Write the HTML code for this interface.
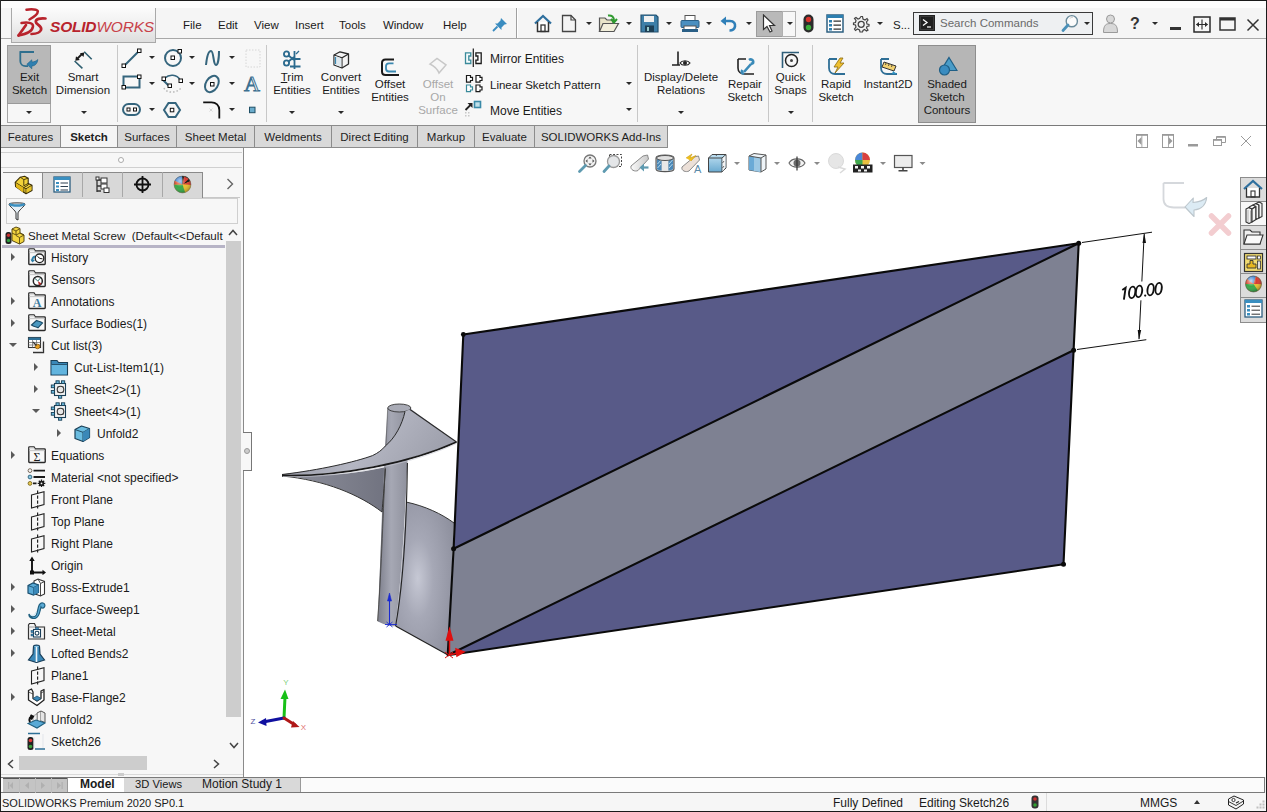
<!DOCTYPE html>
<html><head><meta charset="utf-8">
<style>
*{margin:0;padding:0;box-sizing:border-box}
html,body{width:1267px;height:812px;overflow:hidden;background:#f5f5f5}
body{font-family:"Liberation Sans",sans-serif;font-size:12px;color:#1a1a1a;position:relative}
.a{position:absolute}
.t{position:absolute;white-space:nowrap;line-height:13px}
.c{text-align:center}
.dd{position:absolute;width:0;height:0;border-left:3px solid transparent;border-right:3px solid transparent;border-top:3.5px solid #2a2a2a;margin-left:1px}
.vs{position:absolute;width:1px;background:#c8c8c8}
.tab{position:absolute;top:125px;height:23px;background:#d9d9d9;border:1px solid #8c8c8c;border-left:none;text-align:center;line-height:22px;font-size:11.5px;color:#1e1e1e}
.row{position:absolute;height:22px;line-height:22px;font-size:12px;color:#1a1a1a;white-space:nowrap}
.tri{position:absolute;width:0;height:0;border-top:4px solid transparent;border-bottom:4px solid transparent;border-left:4px solid #5a5a5a}
.trid{position:absolute;width:0;height:0;border-left:4px solid transparent;border-right:4px solid transparent;border-top:4px solid #5a5a5a}
</style></head><body>
<!-- frame borders -->
<div class="a" style="left:0;top:0;width:1267px;height:1px;background:#1a1a1a;z-index:50"></div>
<div class="a" style="left:0;top:0;width:1px;height:812px;background:#2a2a2a;z-index:50"></div>
<div class="a" style="left:1266px;top:0;width:1px;height:812px;background:#1a1a1a;z-index:50"></div>
<div class="a" style="left:0;top:811px;width:1267px;height:1px;background:#1a1a1a;z-index:50"></div>

<!-- top bar -->
<div id="topbar" class="a" style="left:0;top:1px;width:1267px;height:38px;background:#f5f5f5;border-bottom:1px solid #a8a8a8">
  <div class="a" style="left:0;top:0;width:1267px;height:7px;background:#fdfdfd"></div>
</div>

<!-- TOPBAR CONTENT -->
<div class="a" style="left:11px;top:8px;width:145px;height:35px;background:linear-gradient(#fbfbfb,#f2f2f2 40%,#dedede);border:1px solid #a9a9a9;border-top:none;z-index:5">
  <svg class="a" style="left:0px;top:0px" width="40" height="34" viewBox="11 8 40 34">
    <g fill="none" stroke="#b8232c" stroke-linecap="round" stroke-linejoin="round">
      <path d="M25.5 9.8 C30 9 36.5 9.2 36.8 11.3 C37 13.5 33 17 28.5 19.5" stroke-width="2.5"/>
      <path d="M17.5 35.5 L25 25" stroke-width="2.7"/>
      <path d="M20.5 23 C26 22 32.5 22.5 32 26.5 C31.5 30.5 26 34 17.5 35.5" stroke-width="2.5"/>
      <path d="M44.5 18.5 C39 18 34.5 19 34.8 21.8 C35 24.5 40.5 25.5 40.2 29 C40 32 35.5 33.8 30.5 34" stroke-width="2.7"/>
    </g>
  </svg>
  <div class="t" style="left:38px;top:11px;font-size:15.5px;line-height:16px;font-style:italic;color:#b8232c;letter-spacing:-0.2px"><b>SOLID</b><span style="color:#c8424a">WORKS</span></div>
</div>
<div class="t" style="left:183px;top:19px;font-size:11.5px">File</div>
<div class="t" style="left:218px;top:19px;font-size:11.5px">Edit</div>
<div class="t" style="left:254px;top:19px;font-size:11.5px">View</div>
<div class="t" style="left:295px;top:19px;font-size:11.5px">Insert</div>
<div class="t" style="left:339px;top:19px;font-size:11.5px">Tools</div>
<div class="t" style="left:383px;top:19px;font-size:11.5px;letter-spacing:-0.1px">Window</div>
<div class="t" style="left:443px;top:19px;font-size:11.5px">Help</div>
<svg class="a" style="left:492px;top:17px" width="16" height="15" viewBox="0 0 16 15"><path d="M9 1 L15 7 L12.5 7.5 L9.5 10.5 L9.5 13 L3 6.5 L5.5 6.5 L8.5 3.5 Z" fill="#3a8cc0"/><path d="M5.5 9.5 L1 14" stroke="#3a8cc0" stroke-width="1.8"/></svg>
<div class="a" style="left:516px;top:8px;width:1px;height:30px;background:#a0a0a0"></div>
<div class="a" style="left:517px;top:8px;width:1px;height:30px;background:#fff"></div>
<!-- quick access -->
<svg class="a" style="left:533px;top:14px" width="20" height="19" viewBox="0 0 20 19"><path d="M2 9.5 L10 2 L18 9.5" fill="none" stroke="#2e6f9e" stroke-width="2.2"/><path d="M4.5 8 V17.5 H15.5 V8" fill="#fff" stroke="#333" stroke-width="1.5"/><rect x="8" y="11" width="4" height="6.5" fill="none" stroke="#333" stroke-width="1.3"/></svg>
<svg class="a" style="left:561px;top:14px" width="16" height="19" viewBox="0 0 16 19"><path d="M1.5 1.5 H10 L14.5 6 V17.5 H1.5 Z" fill="#f4f4f4" stroke="#444" stroke-width="1.3"/><path d="M10 1.5 V6 H14.5" fill="none" stroke="#444" stroke-width="1.2"/></svg>
<div class="dd" style="left:585px;top:22px"></div>
<svg class="a" style="left:598px;top:14px" width="22" height="19" viewBox="0 0 22 19"><path d="M1.5 4 H7 L9 6 H15 V17.5 H1.5 Z" fill="#e8e4c8" stroke="#555" stroke-width="1.2"/><path d="M1.5 17.5 L5 9.5 H20.5 L16 17.5 Z" fill="#f2efdb" stroke="#555" stroke-width="1.2"/><path d="M10 1.5 C14 1 16 3 16 7 M13 5 L16 8.5 L19 5" fill="none" stroke="#2f9a2f" stroke-width="2"/></svg>
<div class="dd" style="left:625px;top:22px"></div>
<svg class="a" style="left:640px;top:14px" width="19" height="19" viewBox="0 0 19 19"><path d="M1 1 H16 L18 3 V18 H1 Z" fill="#3e7fa8" stroke="#23506e" stroke-width="1.2"/><rect x="4" y="2" width="10" height="6" fill="#f0f0f0"/><rect x="5" y="11.5" width="9" height="6.5" fill="#1e3f55"/><rect x="7" y="13" width="2" height="4" fill="#9cc"/></svg>
<div class="dd" style="left:665px;top:22px"></div>
<svg class="a" style="left:680px;top:14px" width="20" height="19" viewBox="0 0 20 19"><rect x="5" y="1.5" width="10" height="5" fill="#fff" stroke="#555"/><rect x="1" y="6.5" width="18" height="7" rx="1" fill="#4a8fc0" stroke="#2a5f86"/><rect x="4" y="12" width="12" height="5.5" fill="#fff" stroke="#555"/><rect x="2" y="15" width="16" height="3" fill="#2a5f86"/></svg>
<div class="dd" style="left:705px;top:22px"></div>
<svg class="a" style="left:720px;top:16px" width="17" height="16" viewBox="0 0 17 16"><path d="M4 5 H10 C14 5 15.5 8 15 10.5 C14.5 13 12 14.5 9.5 14.5" fill="none" stroke="#2f7fb8" stroke-width="2.6"/><path d="M0.5 5 L6 0.5 V9.5 Z" fill="#2f7fb8"/></svg>
<div class="dd" style="left:745px;top:22px"></div>
<div class="a" style="left:756px;top:11px;width:27px;height:26px;background:#b9b9b9;border:1px solid #9c9c9c"></div>
<div class="a" style="left:782px;top:11px;width:14px;height:26px;background:#f7f7f7;border:1px solid #b0b0b0"></div>
<svg class="a" style="left:762px;top:14px" width="14" height="19" viewBox="0 0 14 19"><path d="M1.5 1 V15.5 L5 12.5 L8 18 L10 17 L7.5 11.5 L12.5 11.5 Z" fill="#fff" stroke="#333" stroke-width="1.2"/></svg>
<div class="dd" style="left:786px;top:22px"></div>
<svg class="a" style="left:803px;top:14px" width="11" height="19" viewBox="0 0 11 19"><rect x="0.5" y="0.5" width="10" height="18" rx="5" fill="#2b2b2b"/><circle cx="5.5" cy="5.5" r="2.7" fill="#d8322a"/><circle cx="5.5" cy="13.5" r="2.7" fill="#3aae3a"/></svg>
<svg class="a" style="left:826px;top:14px" width="18" height="19" viewBox="0 0 18 19"><rect x="1" y="1" width="16" height="17" fill="#fff" stroke="#2d5f80" stroke-width="1.5"/><rect x="1" y="1" width="16" height="3" fill="#2d7fb0"/><g fill="#2d7fb0"><rect x="3" y="6" width="3" height="2.5"/><rect x="3" y="10" width="3" height="2.5"/><rect x="3" y="14" width="3" height="2.5"/></g><g stroke="#333" stroke-width="1.2"><path d="M7.5 7.2 H15 M7.5 11.2 H15 M7.5 15.2 H15"/></g></svg>
<svg class="a" style="left:852px;top:15px" width="18" height="18" viewBox="0 0 18 18"><path d="M9 1.5 L10.5 1.5 L11 4 L13 5 L15 3.5 L16 5 L14.5 7 L15 9 L17 9.5 V11 L15 11.5 L14.5 13 L16 15 L14.5 16 L12.5 14.5 L11 15.5 L10.5 17 H8 L7.5 15 L5.5 14 L3.5 15.5 L2.5 14 L4 12 L3.5 10 L1.5 9.5 V8 L3.5 7.5 L4 5.5 L2.5 3.5 L4 2.5 L6 4 L7.5 3.5 Z" fill="#f2f2f2" stroke="#444" stroke-width="1.2"/><circle cx="9.2" cy="9.3" r="3" fill="none" stroke="#444" stroke-width="1.3"/></svg>
<div class="dd" style="left:876px;top:22px"></div>
<div class="t" style="left:893px;top:19px;font-size:11.5px">S...</div>
<!-- search -->
<div class="a" style="left:913px;top:12px;width:180px;height:23px;background:#eef0f2;border:1px solid #3a3a3a"></div>
<svg class="a" style="left:919px;top:15px" width="16" height="16" viewBox="0 0 16 16"><rect x="0.5" y="0.5" width="15" height="15" fill="#3b3b3b" stroke="#222"/><rect x="2" y="2" width="12" height="12" fill="#1f1f1f"/><path d="M4 4.5 L8 7.5 L4 10.5" fill="none" stroke="#fff" stroke-width="1.3"/><path d="M8 12 H12" stroke="#fff" stroke-width="1.2"/></svg>
<div class="t" style="left:940px;top:17px;font-size:11.5px;color:#6a6a6a">Search Commands</div>
<svg class="a" style="left:1061px;top:14px" width="18" height="19" viewBox="0 0 18 19"><circle cx="10.8" cy="7.2" r="5.6" fill="#fbfbfb" stroke="#6a8a9a" stroke-width="1.4"/><path d="M9 4.5 C9.5 3.5 11 3 12 3.3" fill="none" stroke="#bbb" stroke-width="0.8"/><path d="M7 11 L2 16.5" stroke="#4a90b8" stroke-width="2.8" stroke-linecap="round"/></svg>
<div class="dd" style="left:1083px;top:22px"></div>
<svg class="a" style="left:1103px;top:14px" width="15" height="19" viewBox="0 0 15 19"><circle cx="7.5" cy="5" r="4" fill="#d8d8d8" stroke="#9a9a9a"/><path d="M0.5 18.5 C0.5 11 3 9.5 7.5 9.5 C12 9.5 14.5 11 14.5 18.5 Z" fill="#d8d8d8" stroke="#9a9a9a"/></svg>
<div class="t" style="left:1130px;top:15px;font-size:16px;line-height:18px;font-weight:bold;color:#333">?</div>
<div class="dd" style="left:1151px;top:22px"></div>
<div class="a" style="left:1170px;top:27px;width:11px;height:3px;background:#333"></div>
<svg class="a" style="left:1193px;top:16px" width="18" height="17" viewBox="0 0 18 17"><rect x="1" y="1" width="16" height="15" fill="none" stroke="#2a2a2a" stroke-width="1.5"/><path d="M9 3.5 V13.5 M3.5 8.5 H14.5" stroke="#2a2a2a" stroke-width="1.1"/><path d="M3 8.5 L6 6 V11 Z M15 8.5 L12 6 V11 Z" fill="#2a2a2a"/></svg>
<svg class="a" style="left:1219px;top:17px" width="17" height="14" viewBox="0 0 17 14"><rect x="1" y="1" width="15" height="12" fill="none" stroke="#333" stroke-width="1.5"/><rect x="1" y="1" width="15" height="2.5" fill="#333"/></svg>
<svg class="a" style="left:1246px;top:18px" width="14" height="14" viewBox="0 0 14 14"><path d="M1.5 1.5 L12.5 12.5 M12.5 1.5 L1.5 12.5" stroke="#333" stroke-width="1.5"/></svg>

<!-- ribbon -->
<div id="ribbon" class="a" style="left:0;top:39px;width:1267px;height:86px;background:#f7f7f7"></div>


<!-- RIBBON CONTENT -->
<div class="a" style="left:7px;top:45px;width:44px;height:78px;background:#f7f7f7;border:1px solid #a5a5a5"></div>
<div class="a" style="left:7px;top:45px;width:44px;height:59px;background:#b8b8b8;border:1px solid #9a9a9a"></div>
<svg class="a" style="left:17px;top:49px" width="24" height="22" viewBox="17 49 24 22"><path d="M19.5 52 H34 M20.3 52 V61 C20.3 64 22.5 66.2 25.5 66.2 H28" fill="none" stroke="#2f6f8e" stroke-width="1.8"/><path d="M26.8 64.3 L31.8 59.8 V62 C34 62 36.5 61 37.8 59.5 C37.5 63.5 35 66 31.8 66 V68.8 Z" fill="#2f7fb0" stroke="#1f5f86" stroke-width="0.6"/></svg>
<div class="t c" style="left:7px;top:71px;font-size:11.5px;width:45px">Exit<br>Sketch</div>
<div class="dd" style="left:25px;top:111px"></div>
<svg class="a" style="left:72px;top:49px" width="22" height="22" viewBox="72 49 22 22"><path d="M74.6 61 L82.4 68.3 M84.2 51.7 L91.7 59.2" stroke="#2f5f70" stroke-width="1.6" fill="none"/><path d="M77.5 58.5 L82 54" stroke="#1a1a1a" stroke-width="1.8"/><path d="M75.3 60.8 L76 56.2 L79.9 60.1 Z M84.3 52.5 L79.9 53.3 L83.5 57 Z" fill="#1a1a1a"/></svg>
<div class="t c" style="left:53px;top:71px;font-size:11.5px;width:60px">Smart<br>Dimension</div>
<div class="dd" style="left:80px;top:111px"></div>
<div class="vs" style="left:117px;top:45px;height:77px"></div>
<!-- sketch entity grid -->
<svg class="a" style="left:121px;top:47px" width="145" height="75" viewBox="0 0 145 75">
 <g fill="none" stroke="#35657d" stroke-width="2">
  <path d="M3 19 L18 4"/>
  <rect x="2.5" y="29.5" width="16" height="11"/>
  <rect x="2" y="57" width="17" height="11" rx="5.5"/>
  <circle cx="52" cy="11" r="8"/>
  <path d="M42 33 L48 39"/><path d="M44 31 C48 27 56 27 59 33" stroke-width="1.6"/>
  <path d="M47.5 56 H54.5 L59 63 L54.5 70 H47.5 L43 63 Z"/>
  <path d="M85 18 C86 8 88 4 90 4 C93 4 92 18 95 18 C97 18 98 10 98 4"/>
  <ellipse cx="90.9" cy="37" rx="6" ry="8.8" transform="rotate(32 90.9 37)"/>
 </g>
 <path d="M43 41 C45 46 55 47 60 41" fill="none" stroke="#b8b8b8" stroke-width="1.5" stroke-dasharray="1.5 2"/>
 <path d="M82.2 55.3 H90.5 C95 55.3 98.3 58.5 98.3 63 V71.5" fill="none" stroke="#111" stroke-width="1.8"/><path d="M88.5 61.5 L91.5 64.5 M91.5 61.5 L88.5 64.5" stroke="#ccc" stroke-width="0.8"/>
 <g fill="#fff" stroke="#111" stroke-width="1"><rect x="1" y="17" width="3.5" height="3.5"/><rect x="16.5" y="2" width="3.5" height="3.5"/><rect x="1" y="38.5" width="3.5" height="3.5"/><rect x="16.5" y="28" width="3.5" height="3.5"/><rect x="6" y="61" width="3" height="3"/><rect x="12.5" y="61" width="3" height="3"/><rect x="50" y="9" width="3.5" height="3.5"/><rect x="57" y="2.5" width="3.5" height="3.5"/><rect x="41" y="30" width="3.5" height="3.5"/><rect x="47" y="37" width="3.5" height="3.5"/><rect x="58" y="32" width="3.5" height="3.5"/><rect x="49.3" y="61.3" width="3.5" height="3.5"/><rect x="89.5" y="35.5" width="3.5" height="3.5"/></g>
 <rect x="125" y="3" width="14" height="17" fill="none" stroke="#d6d6d6" stroke-dasharray="1.5 1.5"/>
 <text x="131" y="44" font-family="Liberation Serif" font-size="22" fill="#f5f5f5" stroke="#3d7090" stroke-width="1" text-anchor="middle">A</text>
 <rect x="128.5" y="60.2" width="5.5" height="5.5" fill="#6aaccc" stroke="#1f4f66"/>
</svg>
<div class="dd" style="left:148px;top:56px"></div><div class="dd" style="left:188px;top:56px"></div><div class="dd" style="left:228px;top:56px"></div>
<div class="dd" style="left:148px;top:82px"></div><div class="dd" style="left:188px;top:82px"></div><div class="dd" style="left:228px;top:82px"></div>
<div class="dd" style="left:148px;top:108px"></div><div class="dd" style="left:228px;top:108px"></div>
<div class="vs" style="left:266px;top:45px;height:77px"></div>
<!-- trim/convert/offset -->
<svg class="a" style="left:282px;top:50px" width="20" height="20" viewBox="0 0 20 20"><g fill="none" stroke="#2a6a8e" stroke-width="1.8"><circle cx="4.5" cy="4" r="2.6"/><circle cx="4.5" cy="13" r="2.6"/><path d="M6.5 5.5 L12 10 M6.5 11.5 L12 7"/></g><path d="M12.5 1 V19 M8 16.5 H18.5 M10 9 H18.5" stroke="#2a6a8e" stroke-width="1.8"/><path d="M14 4 L17 1" stroke="#2a6a8e" stroke-width="1.2"/></svg>
<div class="t c" style="left:266px;top:71px;font-size:11.5px;width:52px"><span style="text-decoration:underline">T</span>rim<br>Entities</div>
<div class="dd" style="left:288px;top:111px"></div>
<svg class="a" style="left:332px;top:50px" width="19" height="20" viewBox="0 0 19 20"><path d="M2 5 L8 1.8 L16.5 4 V14 L10 18 L2 15 Z" fill="#f4f4f4" stroke="#2a2a2a" stroke-width="1.3" stroke-linejoin="round"/><path d="M2 5 L10 7.8 L16.5 4 M10 7.8 V18" fill="none" stroke="#2a2a2a" stroke-width="1.1"/><path d="M2.7 5.8 L9.3 8.3 V17 L2.7 14.5 Z" fill="#dfe9ef"/><path d="M3.5 7 V14" stroke="#3a88b0" stroke-width="1.2"/></svg>
<div class="t c" style="left:316px;top:71px;font-size:11.5px;width:50px">Convert<br>Entities</div>
<div class="dd" style="left:337px;top:111px"></div>
<svg class="a" style="left:378px;top:56px" width="24" height="22" viewBox="378 56 24 22"><path d="M394 59.5 H385.5 Q382 59.5 382 63 V71.5 Q382 75 385.5 75 H399" fill="none" stroke="#1a1a1a" stroke-width="2"/><path d="M393.5 63.3 H389 Q386 63.3 386 66.3 V68.5 Q386 71.5 389 71.5 H396" fill="none" stroke="#3a88b0" stroke-width="1.8"/></svg>
<div class="t c" style="left:366px;top:78px;font-size:11.5px;width:48px">Offset<br>Entities</div>
<svg class="a" style="left:428px;top:57px" width="20" height="18" viewBox="0 0 20 18"><path d="M2 7 L9 1.5 L18 8 L11 16 C9 11 6 9 2 7 Z" fill="none" stroke="#c8c8c8" stroke-width="1.5"/></svg>
<div class="t c" style="left:414px;top:78px;font-size:11.5px;width:48px;color:#a8a8a8">Offset<br>On<br>Surface</div>
<svg class="a" style="left:462px;top:47px" width="22" height="22" viewBox="462 47 22 22"><path d="M473.3 48.5 V67" stroke="#1a1a1a" stroke-width="1.2"/><path d="M465.5 52.8 H470.8 V56 H468.8 V60.2 H470.8 V63.5 H465.5 Z" fill="#f4fbfc" stroke="#3a8a9a" stroke-width="1.3"/><path d="M481.2 52.8 H475.9 V56 H477.9 V60.2 H475.9 V63.5 H481.2 Z" fill="#fff" stroke="#1a1a1a" stroke-width="1.3"/></svg>
<div class="t" style="left:490px;top:53px;font-size:12px">Mirror Entities</div>
<svg class="a" style="left:464px;top:73px" width="22" height="22" viewBox="464 73 22 22"><path d="M466.5 75.5 H470.5 V77.3 H472.5 V80.5 H470.5 V82.1 H466.5 Z" fill="#fff" stroke="#1a1a1a" stroke-width="1.2"/><path d="M476 75.5 H480 V77.3 H482 V80.5 H480 V82.1 H476 Z" fill="#fff" stroke="#1a1a1a" stroke-width="1.2"/><path d="M466.5 85 H470.5 V86.8 H472.5 V90 H470.5 V91.6 H466.5 Z" fill="#fff" stroke="#3a8a9a" stroke-width="1.2"/><path d="M476 85 H480 V86.8 H482 V90 H480 V91.6 H476 Z" fill="#fff" stroke="#1a1a1a" stroke-width="1.2"/></svg>
<div class="t" style="left:490px;top:79px;font-size:11.5px;letter-spacing:0px">Linear Sketch Pattern</div>
<div class="dd" style="left:625px;top:82px"></div>
<svg class="a" style="left:464px;top:100px" width="18" height="18" viewBox="0 0 18 18"><path d="M1.5 10 L7 4.5" stroke="#222" stroke-width="1.8"/><path d="M3.5 3 H8.5 V8 Z" fill="#222"/><rect x="10.5" y="1.5" width="6" height="6" fill="#bfe0ea" stroke="#3a8aa8" stroke-width="1.6"/><g fill="#c8c8c8"><rect x="1" y="12" width="1.5" height="1.5"/><rect x="4" y="12" width="1.5" height="1.5"/><rect x="1" y="15" width="1.5" height="1.5"/><rect x="4" y="15" width="1.5" height="1.5"/></g></svg>
<div class="t" style="left:490px;top:105px;font-size:12px">Move Entities</div>
<div class="dd" style="left:625px;top:108px"></div>
<div class="vs" style="left:637px;top:45px;height:77px"></div>
<svg class="a" style="left:671px;top:51px" width="20" height="18" viewBox="0 0 20 18"><path d="M7 0.5 V14 M1 14 H9" stroke="#222" stroke-width="1.6"/><path d="M9 12 C11 9 17 9 19 12 C17 15 11 15 9 12 Z" fill="#fff" stroke="#222" stroke-width="1.2"/><circle cx="14" cy="12" r="2" fill="#222"/></svg>
<div class="t c" style="left:637px;top:71px;font-size:11.5px;width:88px">Display/Delete<br>Relations</div>
<div class="dd" style="left:677px;top:111px"></div>
<svg class="a" style="left:736px;top:57px" width="19" height="19" viewBox="0 0 19 19"><path d="M2 2 H10 M2 2 V11 C2 15 5 17 8 17 H18" fill="none" stroke="#222" stroke-width="1.6"/><path d="M8 15 L15 7 M13 3 C15 1.5 18 3 17 6 L15 7 M6.5 13 C5 15 6 17 8 16" fill="none" stroke="#3a8ab8" stroke-width="2.6"/></svg>
<div class="t c" style="left:725px;top:78px;font-size:11.5px;width:40px">Repair<br>Sketch</div>
<div class="vs" style="left:768px;top:45px;height:77px"></div>
<svg class="a" style="left:781px;top:51px" width="19" height="18" viewBox="0 0 19 18"><path d="M1.5 17 V1.5 H18" fill="none" stroke="#2f5f7a" stroke-width="1.6"/><circle cx="10.5" cy="9.5" r="6" fill="none" stroke="#222" stroke-width="1.5"/><circle cx="10.5" cy="9.5" r="1.5" fill="#444"/></svg>
<div class="t c" style="left:770px;top:71px;font-size:11.5px;width:41px">Quick<br>Snaps</div>
<div class="dd" style="left:787px;top:111px"></div>
<div class="vs" style="left:812px;top:45px;height:77px"></div>
<svg class="a" style="left:827px;top:57px" width="19" height="19" viewBox="0 0 19 19"><path d="M2 2 H10 M2 2 V11 C2 15 5 17 8 17 H18" fill="none" stroke="#2f6f96" stroke-width="1.8"/><path d="M13 1 L7 10 H11 L8 16 L17 6 H13 L16 1 Z" fill="#f0c030" stroke="#8a6a10" stroke-width="0.8"/></svg>
<div class="t c" style="left:815px;top:78px;font-size:11.5px;width:42px">Rapid<br>Sketch</div>
<svg class="a" style="left:879px;top:57px" width="19" height="19" viewBox="0 0 19 19"><path d="M2 2 H10 M2 2 V11 C2 15 5 17 8 17 H18" fill="none" stroke="#2f6f96" stroke-width="1.8"/><path d="M5 5 L17 9 L15 14 L3 10 Z" fill="#f0d070" stroke="#333" stroke-width="1"/><path d="M7 6 L6.5 8 M10 7 L9.5 9 M13 8 L12.5 10" stroke="#333" stroke-width="0.8"/><path d="M14 14 L18 17 L13 17 Z" fill="#2f8fbf"/></svg>
<div class="t c" style="left:860px;top:78px;font-size:11.5px;width:56px">Instant2D</div>
<div class="a" style="left:918px;top:45px;width:58px;height:78px;background:#b6b6b6;border:1px solid #8e8e8e"></div>
<svg class="a" style="left:938px;top:56px" width="20" height="20" viewBox="0 0 20 20"><path d="M11 1.5 L19 14.5 H3 Z" fill="#4a9cc8" stroke="#1f5f86" stroke-width="1.2"/><circle cx="6.5" cy="14" r="5" fill="#3a8cc0" stroke="#1f5f86" stroke-width="1.2"/></svg>
<div class="t c" style="left:918px;top:78px;font-size:11.5px;width:58px">Shaded<br>Sketch<br>Contours</div>

<!-- viewport -->
<div id="vp" class="a" style="left:244px;top:125px;width:1022px;height:652px;background:#fff;border-top:1px solid #7a7a7a"></div>


<!-- VIEWPORT CONTENT -->
<svg class="a" style="left:244px;top:126px" width="1022" height="651" viewBox="244 126 1022 651">
 <defs>
  <linearGradient id="cyl" x1="0" x2="1" y1="0" y2="0"><stop offset="0" stop-color="#7d7f8c"/><stop offset="0.4" stop-color="#a6a8b4"/><stop offset="1" stop-color="#8a8c98"/></linearGradient>
  <radialGradient id="plate" cx="0.38" cy="0.5" r="0.75"><stop offset="0" stop-color="#c6c8d4"/><stop offset="0.35" stop-color="#a6a8b6"/><stop offset="1" stop-color="#8a8c9a"/></radialGradient>
  <linearGradient id="blade1" x1="0" x2="1" y1="0" y2="0.3"><stop offset="0" stop-color="#8a8c98"/><stop offset="0.6" stop-color="#b4b6c2"/><stop offset="1" stop-color="#9fa1ad"/></linearGradient>
  <linearGradient id="blade2" x1="0" x2="1" y1="0" y2="0"><stop offset="0" stop-color="#8f919d"/><stop offset="1" stop-color="#6d6f7c"/></linearGradient>
 </defs>
 <!-- lower curved plate -->
 <path d="M406 502 C425 506 442 514 454 523 L448 655 L395.6 626 C400 590 404 540 406 502 Z" fill="url(#plate)"/>
 <path d="M406 502 C425 506 442 514 454 523" fill="none" stroke="#333" stroke-width="1"/>
 <path d="M395.6 626 L448 655" fill="none" stroke="#222" stroke-width="1.2"/>
 <!-- lower blade -->
 <path d="M282 475 C340 477 370 471 400 464 L398 540 L382 512 C360 495 325 480 282 475 Z" fill="url(#blade2)"/>
 <path d="M282 476 C325 480 360 495 382 512" fill="none" stroke="#333" stroke-width="1"/>
 <!-- cylinder -->
 <path d="M387.7 408 L385 446 L382 513 L378 621.5 C385 625 392 627 395.6 626 C400 590 404 540 407.4 463 L410.9 408 Z" fill="url(#cyl)"/>
 <ellipse cx="399.3" cy="408" rx="11.6" ry="4" fill="#a9abb6" stroke="#333" stroke-width="0.9"/>
 <path d="M387.7 408 L378 621.5" fill="none" stroke="#555" stroke-width="0.6"/>
 <path d="M385.5 468.5 C384 490 383 500 382 512" fill="none" stroke="#333" stroke-width="1"/>
 <!-- upper blade -->
 <path d="M282 474.5 C320 470 355 462 372.5 455.6 C378 453 382 450 385.3 446 C395 438 402 425 405 411.6 L410.9 409 L456.5 442 C410 462 340 476 282 475 Z" fill="url(#blade1)"/>
 <path d="M282 474.5 C320 470 355 462 372.5 455.6 C378 453 382 450 385.3 446 C395 438 402 425 405 411.6" fill="none" stroke="#2a2a2a" stroke-width="1"/>
 <path d="M410 409.5 L456.5 442" fill="none" stroke="#2a2a2a" stroke-width="1.1"/>
 <path d="M282 475.5 C340 477 410 463 456.5 442" fill="none" stroke="#1a1a1a" stroke-width="1.8"/>
 <path d="M283 476.5 C340 478.5 410 465 456.5 443.5" fill="none" stroke="#c8cad4" stroke-width="0.6"/>
 <!-- cylinder right helix line -->
 <path d="M385 468.5 C383 520 381 580 377.5 621" fill="none" stroke="#444" stroke-width="0.8"/>
 <path d="M407.4 463 C406.5 530 403 585 395.6 626" fill="none" stroke="#222" stroke-width="1.1"/>
 <!-- main faces -->
 <path d="M463.3 334.5 L1078.7 243.2 L453.6 548.8 Z" fill="#585a88"/>
 <path d="M1078.7 243.2 L1073.6 350.3 L447.7 655.2 L453.6 548.8 Z" fill="#7e8192"/>
 <path d="M1073.6 350.3 L1063.5 564.3 L447.7 655.2 Z" fill="#585a88"/>
 <g fill="none" stroke="#0a0a0a" stroke-width="2.1" stroke-linejoin="round">
  <path d="M463.3 334.5 L1078.7 243.2 L1073.6 350.3 L1063.5 564.3 L447.7 655.2 L453.6 548.8 Z"/>
  <path d="M1078.7 243.2 L453.6 548.8 M1073.6 350.3 L447.7 655.2"/>
 </g>
 <g fill="#0a0a0a"><circle cx="463.3" cy="334.5" r="2.4"/><circle cx="1078.7" cy="243.2" r="2.5"/><circle cx="1073.6" cy="350.3" r="2.5"/><circle cx="1063.5" cy="564.3" r="2.5"/><circle cx="453.6" cy="548.8" r="2.5"/></g>
 <!-- dimension -->
 <g stroke="#111" stroke-width="1" fill="none">
  <path d="M1082 242.5 L1152 232.2"/>
  <path d="M1077 349.5 L1146.3 339.7"/>
  <path d="M1144.2 234 L1139 339"/>
 </g>
 <path d="M1144.3 233 L1146 243 L1142.5 243 Z M1139 340 L1137.7 330 L1141.2 330 Z" fill="#111"/>
 <rect x="1119" y="281.5" width="46" height="18.8" fill="#fff"/>
 <g fill="none" stroke="#111" stroke-width="1.9">
  <path d="M1123.9 299.6 L1125.6 287.8 L1122.3 290"/>
  <ellipse cx="1132.2" cy="292.4" rx="3.1" ry="5.8" transform="rotate(9 1132.2 292.4)"/>
  <ellipse cx="1139" cy="291.4" rx="3.1" ry="5.8" transform="rotate(9 1139 291.4)"/>
  <ellipse cx="1150.6" cy="289.6" rx="3.1" ry="5.8" transform="rotate(9 1150.6 289.6)"/>
  <ellipse cx="1158.6" cy="288.6" rx="3.1" ry="5.8" transform="rotate(9 1158.6 288.6)"/>
 </g>
 <circle cx="1145.2" cy="295.6" r="1.1" fill="#111"/>
 <!-- origin markers -->
 <g stroke="#1a2ad0" stroke-width="1.1" fill="#1a2ad0"><path d="M389.5 624 V599"/><path d="M387.5 601 L389.5 593 L391.5 601 Z" stroke-width="0.6"/><path d="M385 624.5 H397 M386.5 622 L392.5 627 M392.5 622 L386.5 627" stroke-width="0.9"/></g>
 <g stroke="#e01010" stroke-width="1.5" fill="#e01010"><path d="M449.5 654 V636"/><path d="M446.5 640 L449.5 629 L452.5 640 Z"/><path d="M449 655 L462 652"/><path d="M456 649 L464 652 L457 656 Z"/><path d="M445 652 L453 658 M453 652 L445 658" stroke-width="1"/></g>
 <!-- triad -->
 <g stroke-linecap="round">
  <path d="M284 718 L285 697" stroke="#18c018" stroke-width="3"/>
  <path d="M280.5 699 L285 689.5 L288.5 699 Z" fill="#18c018"/>
  <path d="M284 718 L263 722" stroke="#1010a0" stroke-width="3"/>
  <path d="M266 718 L258 722.5 L266.5 726 Z" fill="#1010a0"/>
  <path d="M284 718 L295 725" stroke="#b01818" stroke-width="3"/>
  <path d="M293 721 L299.5 727 L291 727.5 Z" fill="#b01818"/>
 </g>
 <text x="286" y="685" font-family="Liberation Sans" font-size="8" fill="#80d080" text-anchor="middle">Y</text>
 <text x="253" y="724" font-family="Liberation Sans" font-size="8" fill="#5050a0" text-anchor="middle">Z</text>
 <text x="303.5" y="729.5" font-family="Liberation Sans" font-size="8" fill="#e07070" text-anchor="middle">X</text>
 <!-- confirmation corner -->
 <path d="M1163.5 183 H1184 M1163.5 183 V199 C1163.5 205 1167 207.5 1174 207.5 H1185" fill="none" stroke="#d5d8dc" stroke-width="1.8"/>
 <path d="M1185 207 L1193.3 198 L1193 202.5 C1199 202 1204 200 1206.7 197.5 C1206 205 1201 209.5 1194 210 L1194 216.5 Z" fill="#dcebf4" stroke="#bcc6cc" stroke-width="1.1" stroke-linejoin="round"/>
 <path d="M1211.5 216 L1228.5 233 M1228.5 216 L1211.5 233" stroke="#f3cdd0" stroke-width="5.5" stroke-linecap="round"/>
</svg>
<!-- view heads-up toolbar -->
<svg class="a" style="left:576px;top:150px" width="355" height="26" viewBox="576 150 355 26">
 <defs>
  <linearGradient id="hg1" x1="0" x2="1"><stop offset="0" stop-color="#fafafa"/><stop offset="1" stop-color="#c9c9c9"/></linearGradient>
  <linearGradient id="hcube" x1="0" x2="0" y1="0" y2="1"><stop offset="0" stop-color="#bfe0f2"/><stop offset="1" stop-color="#6aaad0"/></linearGradient>
 </defs>
 <!-- zoom to fit -->
 <circle cx="590" cy="161" r="6" fill="#f2f2f2" stroke="#777" stroke-width="1.3"/>
 <path d="M590 156.5 L588.3 158.5 H591.7 Z M590 165.5 L588.3 163.5 H591.7 Z M585.5 161 L587.5 159.3 V162.7 Z M594.5 161 L592.5 159.3 V162.7 Z" fill="#555"/>
 <path d="M585.5 165.5 L579.5 171.5" stroke="#5e9ab0" stroke-width="2.8" stroke-linecap="round"/>
 <!-- zoom to area -->
 <rect x="609.5" y="154.5" width="12" height="12" fill="none" stroke="#444" stroke-width="1" stroke-dasharray="2 1.5"/>
 <circle cx="613.5" cy="161.5" r="6" fill="#e4e6e8" stroke="#9a9a9a" stroke-width="1.3"/>
 <path d="M609 166 L604 171.5" stroke="#5e9ab0" stroke-width="2.8" stroke-linecap="round"/>
 <!-- previous view -->
 <path d="M631 166 L643 156 L647.5 155 L648.5 159 L638 170.5 C635 172 630 170 631 166 Z" fill="url(#hg1)" stroke="#8a8a8a" stroke-width="1"/>
 <path d="M641 167.5 H648.5" stroke="#5e9ab0" stroke-width="2.2"/><path d="M644 163.5 L639.5 167.5 L644 171.5 Z" fill="#5e9ab0"/>
 <!-- section view -->
 <path d="M656 158 C656 154 674 154 674 158 V169 C674 172.5 656 172.5 656 169 Z" fill="#c8cacc" stroke="#555" stroke-width="1.1"/>
 <path d="M657 159 H661.5 V170.5 C659 170 657 169.5 657 169 Z M668.5 159 H673 V169 C673 169.5 671 170 668.5 170.5 Z" fill="#4a88b8"/>
 <path d="M657.5 164 L661 160 M657.5 168 L661 164 M669 164 L672.5 160 M669 168 L672.5 164" stroke="#bfe0f0" stroke-width="0.9"/>
 <path d="M662 159 H668 V170.8 H662 Z" fill="#e8e8e8"/>
 <ellipse cx="665" cy="158" rx="8.5" ry="2.5" fill="#e0e0e0" stroke="#555" stroke-width="1"/>
 <!-- dynamic annotation -->
 <path d="M682 167 L694 157 L698.5 156 L699.5 160 L689 171 C686 172.5 681 171 682 167 Z" fill="#ece0d8" stroke="#8a8a8a" stroke-width="1"/>
 <path d="M686 158 L692 154 L690 158 L696 155.5 L691 161" fill="#f0c020" stroke="#c89810" stroke-width="0.6"/>
 <text x="694" y="173" font-family="Liberation Sans" font-size="11" fill="#5a8aa8">A</text>
 <!-- display style -->
 <path d="M708.5 158 L712 154.5 H726 V168 L722 172 H708.5 Z" fill="url(#hcube)" stroke="#444" stroke-width="1"/>
 <path d="M708.5 158 H722 V172 M722 158 L726 154.5" fill="none" stroke="#444" stroke-width="1"/>
 <path d="M722.5 158.5 L725.5 155.5 V167.5 L722.5 171.5 Z" fill="#f4f4f4"/>
 <path d="M716 156 L717 154.5 M724 161 L722.5 163 M724 166 L722.5 168" stroke="#444" stroke-width="0.8"/>
 <path d="M734 162 H740 L737 165 Z" fill="#8a8a8a"/>
 <!-- view orientation cube -->
 <path d="M749 156 L754 153.5 L766 155 V169 L761 172 L749 170 Z" fill="#eef4f8" stroke="#555" stroke-width="1"/>
 <path d="M749 156 L761 158 V172 L749 170 Z" fill="#6aaad6"/>
 <path d="M754 157 L761 158 V172 L754 171 Z" fill="#9cc8e4"/>
 <path d="M749 156 L761 158 L766 155 M761 158 V172" fill="none" stroke="#555" stroke-width="1"/>
 <path d="M774 162 H780 L777 165 Z" fill="#8a8a8a"/>
 <!-- hide/show -->
 <path d="M789 163 C792 157.5 802 157.5 805 163 C802 168.5 792 168.5 789 163 Z" fill="#f4f4f4" stroke="#666" stroke-width="1.1"/>
 <circle cx="797" cy="163" r="3.5" fill="#6a6a6a"/><path d="M797 156.5 V170.5" stroke="#333" stroke-width="1.2"/>
 <path d="M814 162 H820 L817 165 Z" fill="#8a8a8a"/>
 <!-- disabled ghost -->
 <circle cx="836" cy="161" r="7.5" fill="#e6e6e6" stroke="#dadada"/>
 <path d="M838 167 L845 169 L840 173" fill="none" stroke="#dadada" stroke-width="1.5"/>
 <!-- appearance -->
 <circle cx="862.5" cy="160" r="7.5" fill="#e8c040"/>
 <path d="M862.5 160 V152.5 A7.5 7.5 0 0 0 855 160 Z" fill="#4a88d8"/>
 <path d="M862.5 160 V152.5 A7.5 7.5 0 0 1 870 160 Z" fill="#d84040"/>
 <path d="M862.5 160 H855 A7.5 7.5 0 0 0 862.5 167.5 Z" fill="#40a850"/>
 <rect x="853" y="164.5" width="19.5" height="8" fill="#222"/>
 <g fill="#f4f4f4"><rect x="855" y="166" width="3" height="2.5"/><rect x="861" y="166" width="3" height="2.5"/><rect x="867" y="166" width="3" height="2.5"/><rect x="858" y="169.5" width="3" height="2"/><rect x="864" y="169.5" width="3" height="2"/></g>
 <path d="M880 162 H886 L883 165 Z" fill="#8a8a8a"/>
 <!-- monitor -->
 <rect x="894.5" y="155.5" width="17.5" height="12" fill="#ececec" stroke="#555" stroke-width="1.2"/>
 <path d="M903 167.5 V170 M898.5 170.8 H907.5" stroke="#444" stroke-width="1.6"/>
 <path d="M919.5 162 H925.5 L922.5 165 Z" fill="#8a8a8a"/>
</svg>
<!-- doc window controls -->
<svg class="a" style="left:1130px;top:130px" width="130" height="25" viewBox="1130 130 130 25">
 <g fill="none" stroke="#9a9a9a" stroke-width="1"><rect x="1136.5" y="134.5" width="11" height="13"/><rect x="1162.5" y="134.5" width="11" height="13"/><rect x="1213.5" y="139.5" width="8" height="6"/><path d="M1216.5 139.5 V136.5 H1225.5 V142.5 H1221.5"/><path d="M1241 136 L1251 146 M1251 136 L1241 146"/></g>
 <g fill="#9a9a9a"><path d="M1137.5 141 L1141.5 137 V145 Z"/><path d="M1172.5 141 L1168.5 137 V145 Z"/><rect x="1141.5" y="135" width="0.8" height="12"/><rect x="1168" y="135" width="0.8" height="12"/><rect x="1188" y="144" width="10" height="2.5"/><rect x="1136.5" y="134.5" width="11" height="1.3"/><rect x="1162.5" y="134.5" width="11" height="1.3"/><rect x="1213.5" y="139.5" width="8" height="1.3"/><rect x="1216.5" y="136.5" width="9" height="1.3"/></g>
</svg>
<!-- task pane tabs -->
<div class="a" style="left:1240px;top:177px;width:26px;height:146px;background:#dcdcdc;border:1px solid #8c8c8c;border-right:none"></div>
<div class="a" style="left:1241px;top:201px;width:25px;height:24px;background:#f7f7f7"></div>
<div class="a" style="left:1240px;top:201px;width:26px;height:1px;background:#8c8c8c"></div>
<div class="a" style="left:1240px;top:225px;width:26px;height:1px;background:#8c8c8c"></div>
<div class="a" style="left:1240px;top:249px;width:26px;height:1px;background:#8c8c8c"></div>
<div class="a" style="left:1240px;top:273px;width:26px;height:1px;background:#8c8c8c"></div>
<div class="a" style="left:1240px;top:297px;width:26px;height:1px;background:#8c8c8c"></div>
<svg class="a" style="left:1241px;top:178px" width="25" height="145" viewBox="0 0 25 145">
 <path d="M3 11 L12 3 L21 11" fill="none" stroke="#2e6f9e" stroke-width="2.2"/><path d="M5.5 10 V19 H18.5 V10" fill="#fff" stroke="#333" stroke-width="1.3"/><rect x="10" y="13" width="4" height="6" fill="none" stroke="#333" stroke-width="1.1"/>
 <g fill="#f4f4f4" stroke="#333" stroke-width="1.1" stroke-linejoin="round"><path d="M5 31 L8 29.5 L11 31 V44 L8 45.5 L5 44 Z"/><path d="M9 28.5 L12 27 L15 28.5 L11 31 L8 29.5 Z"/><path d="M11 31 L15 28.5 V41.5 L11 44 Z"/><path d="M12 27 L15 25.5 L18 27 V40 L15 41.5 V28.5 Z"/><path d="M15 25.5 L18 24 L21 25.5 V38.5 L18 40 V27 Z"/></g><path d="M7 32 V44 M9.5 32.5 V44.5" stroke="#888" stroke-width="0.6"/>
 <path d="M3 52 H9 L11 54 H19 V66 H3 Z" fill="#f0f0f0" stroke="#333" stroke-width="1.1"/><path d="M3 66 L6 57 H22 L19 66 Z" fill="#fafafa" stroke="#333" stroke-width="1.1"/>
 <rect x="3.5" y="75.5" width="18" height="18" fill="#f2dc70" stroke="#333" stroke-width="1.2"/><rect x="6" y="78" width="9" height="3" fill="#fff" stroke="#333" stroke-width="0.9"/><path d="M9 82.5 H12 V86 H15 V90 H6 V86 H9 Z" fill="#e8b820" stroke="#333" stroke-width="0.9"/><rect x="16.5" y="78" width="3" height="3" fill="#fff" stroke="#333" stroke-width="0.8"/><rect x="16.5" y="83" width="3" height="8" fill="#ddd" stroke="#333" stroke-width="0.8"/>
 <defs><radialGradient id="ballhl" cx="0.35" cy="0.3" r="0.7"><stop offset="0" stop-color="#fff" stop-opacity="0.7"/><stop offset="0.5" stop-color="#fff" stop-opacity="0"/><stop offset="1" stop-color="#000" stop-opacity="0.25"/></radialGradient></defs><circle cx="12.5" cy="106" r="8" fill="#e8c030"/><path d="M12.5 106 L6 101 A8 8 0 0 1 15 98.4 Z" fill="#3a7fd0"/><path d="M12.5 106 L15 98.4 A8 8 0 0 1 20.5 106.5 Z" fill="#d83a30"/><path d="M12.5 106 L20.5 106.5 A8 8 0 0 1 17 112.6 Z" fill="#e8c030"/><path d="M12.5 106 L17 112.6 A8 8 0 0 1 4.5 106 Z" fill="#38a848"/><path d="M12.5 106 L4.5 106 A8 8 0 0 1 6 101 Z" fill="#d84a30"/><circle cx="12.5" cy="106" r="8" fill="url(#ballhl)" stroke="#555" stroke-width="0.6"/>
 <rect x="4" y="122" width="17" height="17" fill="#fff" stroke="#2d5f80" stroke-width="1.3"/><rect x="4" y="122" width="17" height="3" fill="#3a8fc0"/><g fill="#3a8fc0"><rect x="6" y="127" width="3" height="2.5"/><rect x="6" y="131" width="3" height="2.5"/><rect x="6" y="135" width="3" height="2.5"/></g><path d="M10.5 128.2 H19 M10.5 132.2 H19 M10.5 136.2 H19" stroke="#333" stroke-width="1"/>
</svg>

<!-- ribbon bottom line -->
<div class="a" style="left:0;top:125px;width:1266px;height:1px;background:#7a7a7a"></div>


<!-- TABS -->
<div class="tab" style="left:1px;width:60px">Features</div>
<div class="tab" style="left:61px;width:57px;background:#f5f5f5;font-weight:bold">Sketch</div>
<div class="tab" style="left:118px;width:59px">Surfaces</div>
<div class="tab" style="left:177px;width:78px">Sheet Metal</div>
<div class="tab" style="left:255px;width:77px">Weldments</div>
<div class="tab" style="left:332px;width:86px">Direct Editing</div>
<div class="tab" style="left:418px;width:57px">Markup</div>
<div class="tab" style="left:475px;width:60px">Evaluate</div>
<div class="tab" style="left:535px;width:133px">SOLIDWORKS Add-Ins</div>
<!-- feature manager panel -->
<div id="fm" class="a" style="left:1px;top:147px;width:243px;height:630px;background:#f7f7f7;border-right:1px solid #8a8a8a"></div>


<!-- FM PANEL CONTENT -->
<div class="a" style="left:1px;top:147px;width:242px;height:1px;background:#8a8a8a"></div>
<div class="a" style="left:1px;top:152px;width:241px;height:1px;background:#d0d0d0"></div>
<div class="a" style="left:1px;top:167px;width:241px;height:1px;background:#d0d0d0"></div>
<div class="a" style="left:118px;top:157px;width:6px;height:6px;border-radius:50%;background:#fff;border:1px solid #aaa"></div>
<div class="a" style="left:3px;top:197px;width:237px;height:1px;background:#c8c8c8"></div>
<div class="a" style="left:42px;top:172px;width:161px;height:26px;background:#d8d8d8;border:1px solid #8a8a8a;border-bottom:none"></div>
<div class="a" style="left:82px;top:172px;width:1px;height:25px;background:#a8a8a8"></div>
<div class="a" style="left:122px;top:172px;width:1px;height:25px;background:#a8a8a8"></div>
<div class="a" style="left:162px;top:172px;width:1px;height:25px;background:#a8a8a8"></div>
<div class="a" style="left:3px;top:172px;width:39px;height:26px;background:#f7f7f7;border-top:1px solid #8a8a8a"></div>
<svg class="a" style="left:13px;top:174px" width="21" height="21" viewBox="13 174 21 21"><path d="M15.2 182.3 L20.3 177.2 L24.6 176.3 L28.2 178.2 V183.4 L32 185.2 V190.4 L26 193.8 L15.6 186.6 Z" fill="#f2d23a" stroke="#3a2e08" stroke-width="1.1" stroke-linejoin="round"/><path d="M15.2 182.3 L23.8 187.6 V193 M23.8 187.6 L28.2 185 V183.4 M20.3 177.2 L23.8 179.6 L28.2 178.2 M23.8 179.6 V185.8 M28.2 183.4 L23.8 185.8 M26 193.8 V188.8 L32 185.2 M26 188.8 L23.8 187.6" fill="none" stroke="#3a2e08" stroke-width="0.9"/><path d="M15.9 183.2 L23.2 187.8 V192.4 L16 187 Z" fill="#e2b818"/><path d="M26.6 189.2 L31.4 186.4 V190 L26.6 192.8 Z" fill="#e8c428"/></svg>
<svg class="a" style="left:53px;top:176px" width="18" height="17" viewBox="0 0 18 17"><rect x="1" y="1" width="16" height="15" fill="#fff" stroke="#2d5f80" stroke-width="1.3"/><rect x="1" y="1" width="16" height="3" fill="#3a8fc0"/><g fill="#3a8fc0"><rect x="3" y="6" width="3" height="2"/><rect x="3" y="9.5" width="3" height="2"/><rect x="3" y="13" width="3" height="2"/></g><path d="M7.5 7 H15 M7.5 10.5 H15 M7.5 14 H15" stroke="#2d3f50" stroke-width="1"/></svg>
<svg class="a" style="left:95px;top:176px" width="15" height="17" viewBox="0 0 15 17"><path d="M2 1 V16 M2 4 H6 M2 10 H6 M2 15 H6" fill="none" stroke="#333" stroke-width="1.3"/><rect x="1" y="1" width="3" height="3" fill="#fff" stroke="#333"/><rect x="6" y="2" width="6" height="5" fill="#fff" stroke="#333"/><rect x="6" y="8" width="6" height="5" fill="#fff" stroke="#333"/><rect x="9" y="12" width="5" height="4.5" fill="#fff" stroke="#333"/></svg>
<svg class="a" style="left:134px;top:176px" width="17" height="17" viewBox="0 0 17 17"><circle cx="8.5" cy="8.5" r="6" fill="none" stroke="#111" stroke-width="1.8"/><path d="M8.5 0 V17 M0 8.5 H17" stroke="#111" stroke-width="1.8"/></svg>
<svg class="a" style="left:173px;top:175px" width="19" height="19" viewBox="3.5 97.5 18 18"><defs><radialGradient id="ballhl2" cx="0.35" cy="0.3" r="0.7"><stop offset="0" stop-color="#fff" stop-opacity="0.6"/><stop offset="0.5" stop-color="#fff" stop-opacity="0"/><stop offset="1" stop-color="#000" stop-opacity="0.2"/></radialGradient></defs><circle cx="12.5" cy="106.5" r="8" fill="#e8c030"/><path d="M12.5 106.5 L5 103 A8 8 0 0 1 12 98.5 Z" fill="#3a7fd0"/><path d="M12.5 106.5 L12 98.5 A8 8 0 0 1 20 103.5 Z" fill="#111"/><path d="M12.5 106.5 L20 103.5 A8 8 0 0 1 20.5 107 Z" fill="#d83a30"/><path d="M12.5 106.5 L20.5 107 A8 8 0 0 1 15 114 Z" fill="#e8c030"/><path d="M12.5 106.5 L15 114 A8 8 0 0 1 4.5 106.5 Z" fill="#38a848"/><path d="M12.5 106.5 L4.5 106.5 A8 8 0 0 1 5 103 Z" fill="#d84a30"/><path d="M12.5 106.5 L14 99 L18.5 101 L13.5 106 Z" fill="#d83a30"/><circle cx="12.5" cy="106.5" r="8" fill="url(#ballhl2)" stroke="#666" stroke-width="0.5"/></svg>
<svg class="a" style="left:226px;top:178px" width="8" height="12" viewBox="0 0 8 12"><path d="M1.5 1 L6.5 6 L1.5 11" fill="none" stroke="#666" stroke-width="1.4"/></svg>
<div class="a" style="left:6px;top:198px;width:232px;height:26px;background:#f7f7f7;border:1px solid #cfcfcf"></div>
<svg class="a" style="left:8px;top:202px" width="18" height="19" viewBox="0 0 18 19"><path d="M1 2 C1 0.5 17 0.5 17 2 C17 4 10 9 10 11 V18 L8 17 V11 C8 9 1 4 1 2 Z" fill="#e8f0f6" stroke="#333" stroke-width="1"/><path d="M1.5 2 C4 4 14 4 16.5 2" fill="none" stroke="#3a8fc0" stroke-width="2.5"/></svg>
<svg class="a" style="left:5px;top:225px" width="20" height="20" viewBox="0 0 20 20"><rect x="0.5" y="7" width="6" height="12" rx="2.5" fill="#222"/><circle cx="3.5" cy="10.3" r="1.7" fill="#c83030"/><circle cx="3.5" cy="15.5" r="1.7" fill="#30a040"/><path d="M7 4 L11 2 L15 3.5 V8 L19 10 V16.5 L14.5 19 L7 15.5 Z" fill="#f2d440" stroke="#5a4a10" stroke-width="1"/><path d="M7 4 L11 6 L15 3.5 M11 6 V10 L7 8 M11 10 L15 8 L19 10 L14.5 12.5 V19 M14.5 12.5 L11 10.5" fill="none" stroke="#5a4a10" stroke-width="0.9"/></svg>
<div class="t" style="left:28px;top:229px;width:198px;overflow:hidden;font-size:11.6px;line-height:13px">Sheet Metal Screw&nbsp; (Default&lt;&lt;Default</div>
<svg class="a" style="left:228px;top:229px" width="10" height="7" viewBox="0 0 10 7"><path d="M1 6 L5 1.5 L9 6" fill="none" stroke="#444" stroke-width="1.5"/></svg>
<div class="a" style="left:2px;top:245px;width:223px;height:3px;background:#b7b4c6"></div>
<div class="a" style="left:226px;top:241px;width:15px;height:476px;background:#cdcdcd"></div>
<svg class="a" style="left:229px;top:742px" width="10" height="7" viewBox="0 0 10 7"><path d="M1 1 L5 5.5 L9 1" fill="none" stroke="#444" stroke-width="1.5"/></svg>
<div class="a" style="left:19px;top:756px;width:128px;height:14px;background:#cdcdcd"></div>
<svg class="a" style="left:7px;top:759px" width="7" height="10" viewBox="0 0 7 10"><path d="M6 1 L1.5 5 L6 9" fill="none" stroke="#444" stroke-width="1.5"/></svg>
<svg class="a" style="left:213px;top:759px" width="7" height="10" viewBox="0 0 7 10"><path d="M1 1 L5.5 5 L1 9" fill="none" stroke="#444" stroke-width="1.5"/></svg>
<div class="a" style="left:1px;top:774px;width:242px;height:1px;background:#dadada"></div>
<div class="a" style="left:118px;top:773px;width:6px;height:3px;background:#ccc"></div>


<!-- TREE -->
<div class="tri" style="left:11px;top:253px"></div>
<svg class="a" style="left:27px;top:248px" width="19" height="19" viewBox="0 0 19 19"><path d="M1.8 1.6 Q1.8 0.9 2.5 0.9 H7 L8.2 2.9 H17.4 Q18.2 2.9 18.2 3.6 V15.8 Q18.2 16.5 17.4 16.5 H2.5 Q1.8 16.5 1.8 15.8 Z" fill="#f8f8f8" stroke="#2a2a2a" stroke-width="1.4"/><path d="M2.5 1.6 H7 L8 3.2 H2.5 Z" fill="#ddd"/><path d="M2.5 4.6 H17.5" stroke="#c8c8c8" stroke-width="1.1"/><circle cx="12.5" cy="10.3" r="4.3" fill="#fff" stroke="#222" stroke-width="1.3"/><path d="M10.5 8.5 L13 10.5 L15.5 10.8" stroke="#222" fill="none" stroke-width="1"/><path d="M8 8.5 C6 9 5 11 5.5 13" fill="none" stroke="#2f7fa8" stroke-width="2.2"/><path d="M3.5 11.5 L5.5 14.5 L8 12" fill="#2f7fa8"/></svg>
<div class="t" style="left:51px;top:252px">History</div>
<svg class="a" style="left:27px;top:270px" width="19" height="19" viewBox="0 0 19 19"><path d="M1.8 1.6 Q1.8 0.9 2.5 0.9 H7 L8.2 2.9 H17.4 Q18.2 2.9 18.2 3.6 V15.8 Q18.2 16.5 17.4 16.5 H2.5 Q1.8 16.5 1.8 15.8 Z" fill="#f8f8f8" stroke="#2a2a2a" stroke-width="1.4"/><path d="M2.5 1.6 H7 L8 3.2 H2.5 Z" fill="#ddd"/><path d="M2.5 4.6 H17.5" stroke="#c8c8c8" stroke-width="1.1"/><circle cx="10.8" cy="11" r="4.5" fill="#fff" stroke="#222" stroke-width="1.5"/><path d="M10.8 11 L14.5 13.5 A4.5 4.5 0 0 1 12 15.3 Z" fill="#b83030"/><path d="M8 8.5 L10.8 11 L13.5 8" stroke="#2a6a6a" stroke-width="1" fill="none"/></svg>
<div class="t" style="left:51px;top:274px">Sensors</div>
<div class="tri" style="left:11px;top:297px"></div>
<svg class="a" style="left:27px;top:292px" width="19" height="19" viewBox="0 0 19 19"><path d="M1.8 1.6 Q1.8 0.9 2.5 0.9 H7 L8.2 2.9 H17.4 Q18.2 2.9 18.2 3.6 V15.8 Q18.2 16.5 17.4 16.5 H2.5 Q1.8 16.5 1.8 15.8 Z" fill="#f8f8f8" stroke="#2a2a2a" stroke-width="1.4"/><path d="M2.5 1.6 H7 L8 3.2 H2.5 Z" fill="#ddd"/><path d="M2.5 4.6 H17.5" stroke="#c8c8c8" stroke-width="1.1"/><text x="10" y="15.3" font-family="Liberation Serif" font-weight="bold" font-size="12" fill="#3a7aa0" text-anchor="middle">A</text></svg>
<div class="t" style="left:51px;top:296px">Annotations</div>
<div class="tri" style="left:11px;top:319px"></div>
<svg class="a" style="left:27px;top:314px" width="19" height="19" viewBox="0 0 19 19"><path d="M1.8 1.6 Q1.8 0.9 2.5 0.9 H7 L8.2 2.9 H17.4 Q18.2 2.9 18.2 3.6 V15.8 Q18.2 16.5 17.4 16.5 H2.5 Q1.8 16.5 1.8 15.8 Z" fill="#f8f8f8" stroke="#2a2a2a" stroke-width="1.4"/><path d="M2.5 1.6 H7 L8 3.2 H2.5 Z" fill="#ddd"/><path d="M2.5 4.6 H17.5" stroke="#c8c8c8" stroke-width="1.1"/><path d="M4.5 11 L9.5 6.5 C11.5 7.5 13.5 7 15.5 9 L11 13.8 C9 12.5 7 13 4.5 11 Z" fill="#4a98c0" stroke="#1a4a66" stroke-width="1.1"/></svg>
<div class="t" style="left:51px;top:318px">Surface Bodies(1)</div>
<div class="trid" style="left:9px;top:343px"></div>
<svg class="a" style="left:27px;top:336px" width="19" height="19" viewBox="0 0 19 19"><rect x="1.5" y="1.5" width="12" height="10" fill="#fff" stroke="#333" stroke-width="1.1"/><rect x="1.5" y="1.5" width="12" height="2.5" fill="#2d6f96"/><path d="M1.5 6.5 H13.5 M1.5 9 H13.5 M5.5 4 V11.5 M9.5 4 V11.5" stroke="#666" stroke-width="0.7"/><path d="M6 16.5 H16.5 V5.5" fill="none" stroke="#333" stroke-width="1.3"/><path d="M7 15.5 H15.5 V7" fill="none" stroke="#ccc" stroke-width="0.8"/><circle cx="10.5" cy="10.5" r="2.3" fill="#e8a020" stroke="#8a5a10" stroke-width="0.8"/><path d="M6 6 L9.5 9.5" stroke="#333" stroke-width="1.2"/></svg>
<div class="t" style="left:51px;top:340px">Cut list(3)</div>
<div class="tri" style="left:34px;top:363px"></div>
<svg class="a" style="left:50px;top:358px" width="19" height="19" viewBox="0 0 19 19"><path d="M1 2.5 H7 L8.5 4.5 H17.5 V17 H1 Z" fill="#3a88b8" stroke="#1a3f56" stroke-width="1.1"/><path d="M1.6 6.5 H16.9 V16.4 H1.6 Z" fill="#62b4de"/><path d="M1.6 6.5 H16.9" stroke="#1a3f56" stroke-width="0.8"/></svg>
<div class="t" style="left:74px;top:362px">Cut-List-Item1(1)</div>
<div class="tri" style="left:34px;top:385px"></div>
<svg class="a" style="left:50px;top:380px" width="19" height="19" viewBox="0 0 19 19"><rect x="4.5" y="3.5" width="11" height="12" fill="#f4f4f4" stroke="#1a3f56" stroke-width="1.1"/><rect x="7" y="6" width="7" height="7" fill="#bdbdbd"/><g fill="#6ab8dc" stroke="#1a3f56" stroke-width="0.9"><rect x="6" y="0.8" width="3.2" height="2.7"/><rect x="11.5" y="0.8" width="3.2" height="2.7"/><rect x="1.3" y="5" width="3.2" height="2.7"/><rect x="1.3" y="10.5" width="3.2" height="2.7"/><rect x="8.5" y="15.5" width="3.2" height="2.7"/></g><circle cx="10.5" cy="9.5" r="3.3" fill="#e8e8e8" stroke="#333" stroke-width="1.1"/></svg>
<div class="t" style="left:74px;top:384px">Sheet&lt;2&gt;(1)</div>
<div class="trid" style="left:32px;top:409px"></div>
<svg class="a" style="left:50px;top:402px" width="19" height="19" viewBox="0 0 19 19"><rect x="4.5" y="3.5" width="11" height="12" fill="#f4f4f4" stroke="#1a3f56" stroke-width="1.1"/><rect x="7" y="6" width="7" height="7" fill="#bdbdbd"/><g fill="#6ab8dc" stroke="#1a3f56" stroke-width="0.9"><rect x="6" y="0.8" width="3.2" height="2.7"/><rect x="11.5" y="0.8" width="3.2" height="2.7"/><rect x="1.3" y="5" width="3.2" height="2.7"/><rect x="1.3" y="10.5" width="3.2" height="2.7"/><rect x="8.5" y="15.5" width="3.2" height="2.7"/></g><circle cx="10.5" cy="9.5" r="3.3" fill="#e8e8e8" stroke="#333" stroke-width="1.1"/></svg>
<div class="t" style="left:74px;top:406px">Sheet&lt;4&gt;(1)</div>
<div class="tri" style="left:57px;top:429px"></div>
<svg class="a" style="left:73px;top:424px" width="19" height="19" viewBox="0 0 19 19"><path d="M2 5.5 L8.5 2 L16.5 4.5 V13.5 L10 17.5 L2 14.5 Z" fill="#6abce0" stroke="#1a3f56" stroke-width="1.2" stroke-linejoin="round"/><path d="M2 5.5 L10 8.3 L16.5 4.5 M10 8.3 V17.5" fill="none" stroke="#1a3f56" stroke-width="0.9"/><path d="M10 8.3 L16.5 4.5 V13.5 L10 17.5 Z" fill="#3a88b8"/></svg>
<div class="t" style="left:97px;top:428px">Unfold2</div>
<div class="tri" style="left:11px;top:451px"></div>
<svg class="a" style="left:27px;top:446px" width="19" height="19" viewBox="0 0 19 19"><path d="M1.8 1.6 Q1.8 0.9 2.5 0.9 H7 L8.2 2.9 H17.4 Q18.2 2.9 18.2 3.6 V15.8 Q18.2 16.5 17.4 16.5 H2.5 Q1.8 16.5 1.8 15.8 Z" fill="#f8f8f8" stroke="#2a2a2a" stroke-width="1.4"/><path d="M2.5 1.6 H7 L8 3.2 H2.5 Z" fill="#ddd"/><path d="M2.5 4.6 H17.5" stroke="#c8c8c8" stroke-width="1.1"/><text x="10" y="15.3" font-family="Liberation Serif" font-size="12" fill="#1a1a1a" text-anchor="middle">&#931;</text></svg>
<div class="t" style="left:51px;top:450px">Equations</div>
<svg class="a" style="left:27px;top:468px" width="19" height="19" viewBox="0 0 19 19"><circle cx="3" cy="2.6" r="1.9" fill="#f5f5f5" stroke="#6a5a4a" stroke-width="0.9"/><circle cx="3" cy="9" r="1.9" fill="#8cc8e0" stroke="#2a5f7a" stroke-width="0.9"/><circle cx="3" cy="15.4" r="1.9" fill="#e8c850" stroke="#7a6a20" stroke-width="0.9"/><path d="M6.5 2.6 H18 M6.5 9 H18 M6 15.4 H9.5" stroke="#1a1a1a" stroke-width="1.8"/><circle cx="14.5" cy="15.4" r="2.6" fill="#1a1a1a"/><path d="M14.5 11.6 V19.2 M10.7 15.4 H18.3 M11.8 12.7 L17.2 18.1 M17.2 12.7 L11.8 18.1" stroke="#1a1a1a" stroke-width="1.3"/><circle cx="14.5" cy="15.4" r="0.9" fill="#f7f7f7"/></svg>
<div class="t" style="left:51px;top:472px">Material &lt;not specified&gt;</div>
<svg class="a" style="left:27px;top:490px" width="19" height="19" viewBox="0 0 19 19"><path d="M4.5 5 L17 1.7 V14.6 L4.5 18 Z" fill="none" stroke="#222" stroke-width="1.1"/><path d="M10.6 0.5 V18.5" stroke="#222" stroke-width="1.2" stroke-dasharray="3.2 1.8"/></svg>
<div class="t" style="left:51px;top:494px">Front Plane</div>
<svg class="a" style="left:27px;top:512px" width="19" height="19" viewBox="0 0 19 19"><path d="M4.5 5 L17 1.7 V14.6 L4.5 18 Z" fill="none" stroke="#222" stroke-width="1.1"/><path d="M10.6 0.5 V18.5" stroke="#222" stroke-width="1.2" stroke-dasharray="3.2 1.8"/></svg>
<div class="t" style="left:51px;top:516px">Top Plane</div>
<svg class="a" style="left:27px;top:534px" width="19" height="19" viewBox="0 0 19 19"><path d="M4.5 5 L17 1.7 V14.6 L4.5 18 Z" fill="none" stroke="#222" stroke-width="1.1"/><path d="M10.6 0.5 V18.5" stroke="#222" stroke-width="1.2" stroke-dasharray="3.2 1.8"/></svg>
<div class="t" style="left:51px;top:538px">Right Plane</div>
<svg class="a" style="left:27px;top:556px" width="19" height="19" viewBox="0 0 19 19"><path d="M5 17 V3 M4 16.5 H17" stroke="#111" stroke-width="1.9" fill="none"/><path d="M2.3 5 L5 0.5 L7.7 5 Z M15.5 13.8 L19 16.5 L15.5 19.2 Z" fill="#111"/><rect x="3" y="14.5" width="4" height="4" fill="#111"/></svg>
<div class="t" style="left:51px;top:560px">Origin</div>
<div class="tri" style="left:11px;top:583px"></div>
<svg class="a" style="left:27px;top:578px" width="19" height="19" viewBox="0 0 19 19"><path d="M7 3 L11 1 L17.5 3.5 V16 L13.5 18 L7 15.5 Z" fill="#fff" stroke="#333" stroke-width="1.1"/><path d="M13.5 5.5 V18 M11 1 L13.5 5.5 L17.5 3.5" fill="none" stroke="#333" stroke-width="0.9"/><path d="M1 7.5 L6 5 L11.5 7 V14.5 L6.5 17 L1 15 Z" fill="#5aaad6" stroke="#1a4f6f" stroke-width="1.2"/><path d="M1 7.5 L6.5 9.5 L11.5 7 M6.5 9.5 V17" fill="none" stroke="#1a4f6f" stroke-width="0.9"/><path d="M6.5 9.5 L11.5 7 V14.5 L6.5 17 Z" fill="#3a88b8"/></svg>
<div class="t" style="left:51px;top:582px">Boss-Extrude1</div>
<div class="tri" style="left:11px;top:605px"></div>
<svg class="a" style="left:27px;top:600px" width="19" height="19" viewBox="0 0 19 19"><path d="M2 14 C3 18 9 18 10 13 L11.5 7 C12 4 14 2.5 16 3 C18 3.5 18.5 6 17 7.5 C16 8.5 14.5 8 14 7 L13 11 C12 16 10 19 6 18.5 C3.5 18 1.5 16.5 2 14 Z" fill="#5aaad6" stroke="#1f5f7f" stroke-width="1.2"/><path d="M4 15 C6 16 8 15 9 12" fill="none" stroke="#bfe4f6" stroke-width="1"/></svg>
<div class="t" style="left:51px;top:604px">Surface-Sweep1</div>
<div class="tri" style="left:11px;top:627px"></div>
<svg class="a" style="left:27px;top:622px" width="19" height="19" viewBox="0 0 19 19"><path d="M1.5 3 V17 H17.5 V5 H9 L7.5 1.5 H2.5 Z" fill="#f4f4f4" stroke="#333" stroke-width="1.2"/><path d="M1.5 5 H17.5" stroke="#888" stroke-width="0.8"/><rect x="6.5" y="7.5" width="7" height="7.5" fill="#fff" stroke="#1a3f5a" stroke-width="1.1"/><circle cx="10" cy="11.2" r="1.9" fill="none" stroke="#1a3f5a" stroke-width="1.1"/><g fill="#3a88b8" stroke="#1a3f5a" stroke-width="0.5"><rect x="4" y="8.5" width="2.5" height="2"/><rect x="4" y="12" width="2.5" height="2"/><rect x="8.5" y="5.5" width="3" height="2"/></g></svg>
<div class="t" style="left:51px;top:626px">Sheet-Metal</div>
<div class="tri" style="left:11px;top:649px"></div>
<svg class="a" style="left:27px;top:644px" width="19" height="19" viewBox="0 0 19 19"><path d="M6.5 2.5 C6.5 0.5 12.5 0.5 12.5 2.5 L13 10 L17.5 16 L9.5 18.5 L1.5 16 L6 10 Z" fill="#3a88b8" stroke="#1a3f5a" stroke-width="1.2"/><path d="M9.5 3 V18" stroke="#eef6fa" stroke-width="1.6"/><path d="M7 3 C7 1.8 12 1.8 12 3" fill="#8cc8e8"/></svg>
<div class="t" style="left:51px;top:648px">Lofted Bends2</div>
<svg class="a" style="left:27px;top:666px" width="19" height="19" viewBox="0 0 19 19"><path d="M4.5 5 L17 1.7 V14.6 L4.5 18 Z" fill="none" stroke="#222" stroke-width="1.1"/><path d="M10.6 0.5 V18.5" stroke="#222" stroke-width="1.2" stroke-dasharray="3.2 1.8"/></svg>
<div class="t" style="left:51px;top:670px">Plane1</div>
<div class="tri" style="left:11px;top:693px"></div>
<svg class="a" style="left:27px;top:688px" width="19" height="19" viewBox="0 0 19 19"><path d="M1.5 2.5 L4.5 1 L6 4 V10.5 L10 13 L14 10.5 V3 L17 1.5 V12 L10 17.5 L1.5 12 Z" fill="#fff" stroke="#222" stroke-width="1.3" stroke-linejoin="round"/><path d="M6 10.5 L10 8 L14 10.5 L10 13 Z" fill="#3a88b8" stroke="#1f4f6f" stroke-width="0.8"/><path d="M1.5 4 L6 6 M14 5 L17 3.5" stroke="#333" stroke-width="0.8"/></svg>
<div class="t" style="left:51px;top:692px">Base-Flange2</div>
<svg class="a" style="left:27px;top:710px" width="19" height="19" viewBox="0 0 19 19"><path d="M10 3 L14 1 V11 L10 13 Z" fill="#f4f4f4" stroke="#555" stroke-width="1"/><path d="M14 1 L18 3 V12.5 L14 11" fill="#e4e4e4" stroke="#555" stroke-width="1"/><path d="M6 6 L10 4 V12 L6 14 Z" fill="#f0f0f0" stroke="#888" stroke-width="0.8"/><path d="M1 13.5 L9 10 L18 13 L10 18 Z" fill="#5aaad6" stroke="#1f5f7f" stroke-width="1.1"/><path d="M3 12 C1.5 9 3 6 6 6.5 M4 9.5 L6 6.5 L3.5 5" fill="none" stroke="#111" stroke-width="2"/></svg>
<div class="t" style="left:51px;top:714px">Unfold2</div>
<svg class="a" style="left:27px;top:732px" width="19" height="19" viewBox="0 0 19 19"><rect x="0.5" y="5" width="6" height="13" rx="2.5" fill="#222"/><circle cx="3.5" cy="8.5" r="1.8" fill="#e03a3a"/><circle cx="3.5" cy="14.5" r="1.8" fill="#3aa03a"/><path d="M1 1.5 H13 M8 17 H18" stroke="#2d6f96" stroke-width="1.6"/><path d="M16 2 V16 M7 5 V16" stroke="#d8dde4" stroke-width="0.7"/></svg>
<div class="t" style="left:51px;top:736px">Sketch26</div>
<!-- /TREE -->
<!-- bottom tab bar -->
<div id="btabs" class="a" style="left:1px;top:777px;width:1264px;height:16px;background:#fbfbfb;border-right:1px solid #7a7a7a;border-top:1px solid #7a7a7a;border-bottom:1px solid #7a7a7a"></div>
<!-- status bar -->
<div id="status" class="a" style="left:1px;top:793px;width:1265px;height:18px;background:#f6f6f6"></div>


<!-- BOTTOM CONTENT -->
<div class="a" style="left:243px;top:432px;width:9px;height:39px;background:#f7f7f7;border:1px solid #777;border-left:none"></div>
<div class="a" style="left:244px;top:448px;width:6px;height:6px;border-radius:50%;background:#ccc;border:1px solid #999"></div>
<div class="a" style="left:3px;top:778px;width:64px;height:14px;background:#c4c4c4;border-top:1px solid #555"></div>
<svg class="a" style="left:3px;top:778px" width="64" height="15" viewBox="0 0 64 15"><g stroke="#bdbdbd" stroke-width="1"><path d="M16.5 0 V15 M32.5 0 V15 M48.5 0 V15"/></g><g fill="#b0b0b0"><path d="M6 4 V11 M10 4 L6.5 7.5 L10 11 Z"/><rect x="5" y="4" width="1.2" height="7"/><path d="M26 4 L22 7.5 L26 11 Z"/><path d="M38 4 L42 7.5 L38 11 Z"/><path d="M54 4 L58 7.5 L54 11 Z"/><rect x="58.5" y="4" width="1.2" height="7"/></g></svg>
<div class="a" style="left:67px;top:778px;width:58px;height:14px;background:#fff;border-left:1px solid #9a9a9a;border-right:1px solid #9a9a9a"></div>
<div class="a" style="left:124px;top:778px;width:69px;height:14px;background:#d9d9d9;border-right:1px solid #9a9a9a"></div>
<div class="a" style="left:192px;top:778px;width:109px;height:14px;background:#d9d9d9;border-right:1px solid #9a9a9a"></div>
<div class="t" style="left:80px;top:777px;font-weight:bold;font-size:12px;line-height:14px">Model</div>
<div class="t" style="left:135px;top:777px;font-size:11.2px;line-height:14px">3D Views</div>
<div class="t" style="left:202px;top:777px;font-size:12px;line-height:14px">Motion Study 1</div>
<div class="t" style="left:2px;top:796px;font-size:11px;line-height:14px">SOLIDWORKS Premium 2020 SP0.1</div>
<div class="t" style="left:833px;top:796px;font-size:12px;line-height:14px">Fully Defined</div>
<div class="t" style="left:919px;top:796px;font-size:12px;line-height:14px">Editing Sketch26</div>
<svg class="a" style="left:1031px;top:795px" width="8" height="14" viewBox="0 0 8 14"><rect x="0.5" y="0.5" width="7" height="13" rx="3" fill="#333"/><circle cx="4" cy="4" r="1.8" fill="#d03030"/><circle cx="4" cy="10" r="1.8" fill="#30a030"/></svg>
<div class="a" style="left:1046px;top:793px;width:1px;height:18px;background:#dcdcdc"></div>
<div class="t" style="left:1140px;top:796px;font-size:12px;line-height:14px">MMGS</div>
<div class="a" style="left:1194px;top:800px;width:0;height:0;border-left:3px solid transparent;border-right:3px solid transparent;border-bottom:4px solid #333"></div>
<svg class="a" style="left:1227px;top:795px" width="18" height="15" viewBox="0 0 18 15"><path d="M1.5 4 L7 1 L16.5 5 V9 L9 14 L1.5 10 Z" fill="#f4f4f4" stroke="#222" stroke-width="1"/><path d="M1.5 6.5 L9 10.5 L16.5 6" fill="none" stroke="#222" stroke-width="0.9"/><circle cx="6.5" cy="5" r="1.6" fill="#fff" stroke="#222" stroke-width="0.9"/><path d="M9 8 L12 6.5" stroke="#222" stroke-width="1.2"/></svg>
<g></g>
<svg class="a" style="left:1256px;top:800px" width="9" height="9" viewBox="0 0 9 9"><g fill="#c0c0c0"><rect x="6.5" y="0.5" width="2" height="2"/><rect x="3.5" y="3.5" width="2" height="2"/><rect x="6.5" y="3.5" width="2" height="2"/><rect x="0.5" y="6.5" width="2" height="2"/><rect x="3.5" y="6.5" width="2" height="2"/><rect x="6.5" y="6.5" width="2" height="2"/></g></svg>

</body></html>
